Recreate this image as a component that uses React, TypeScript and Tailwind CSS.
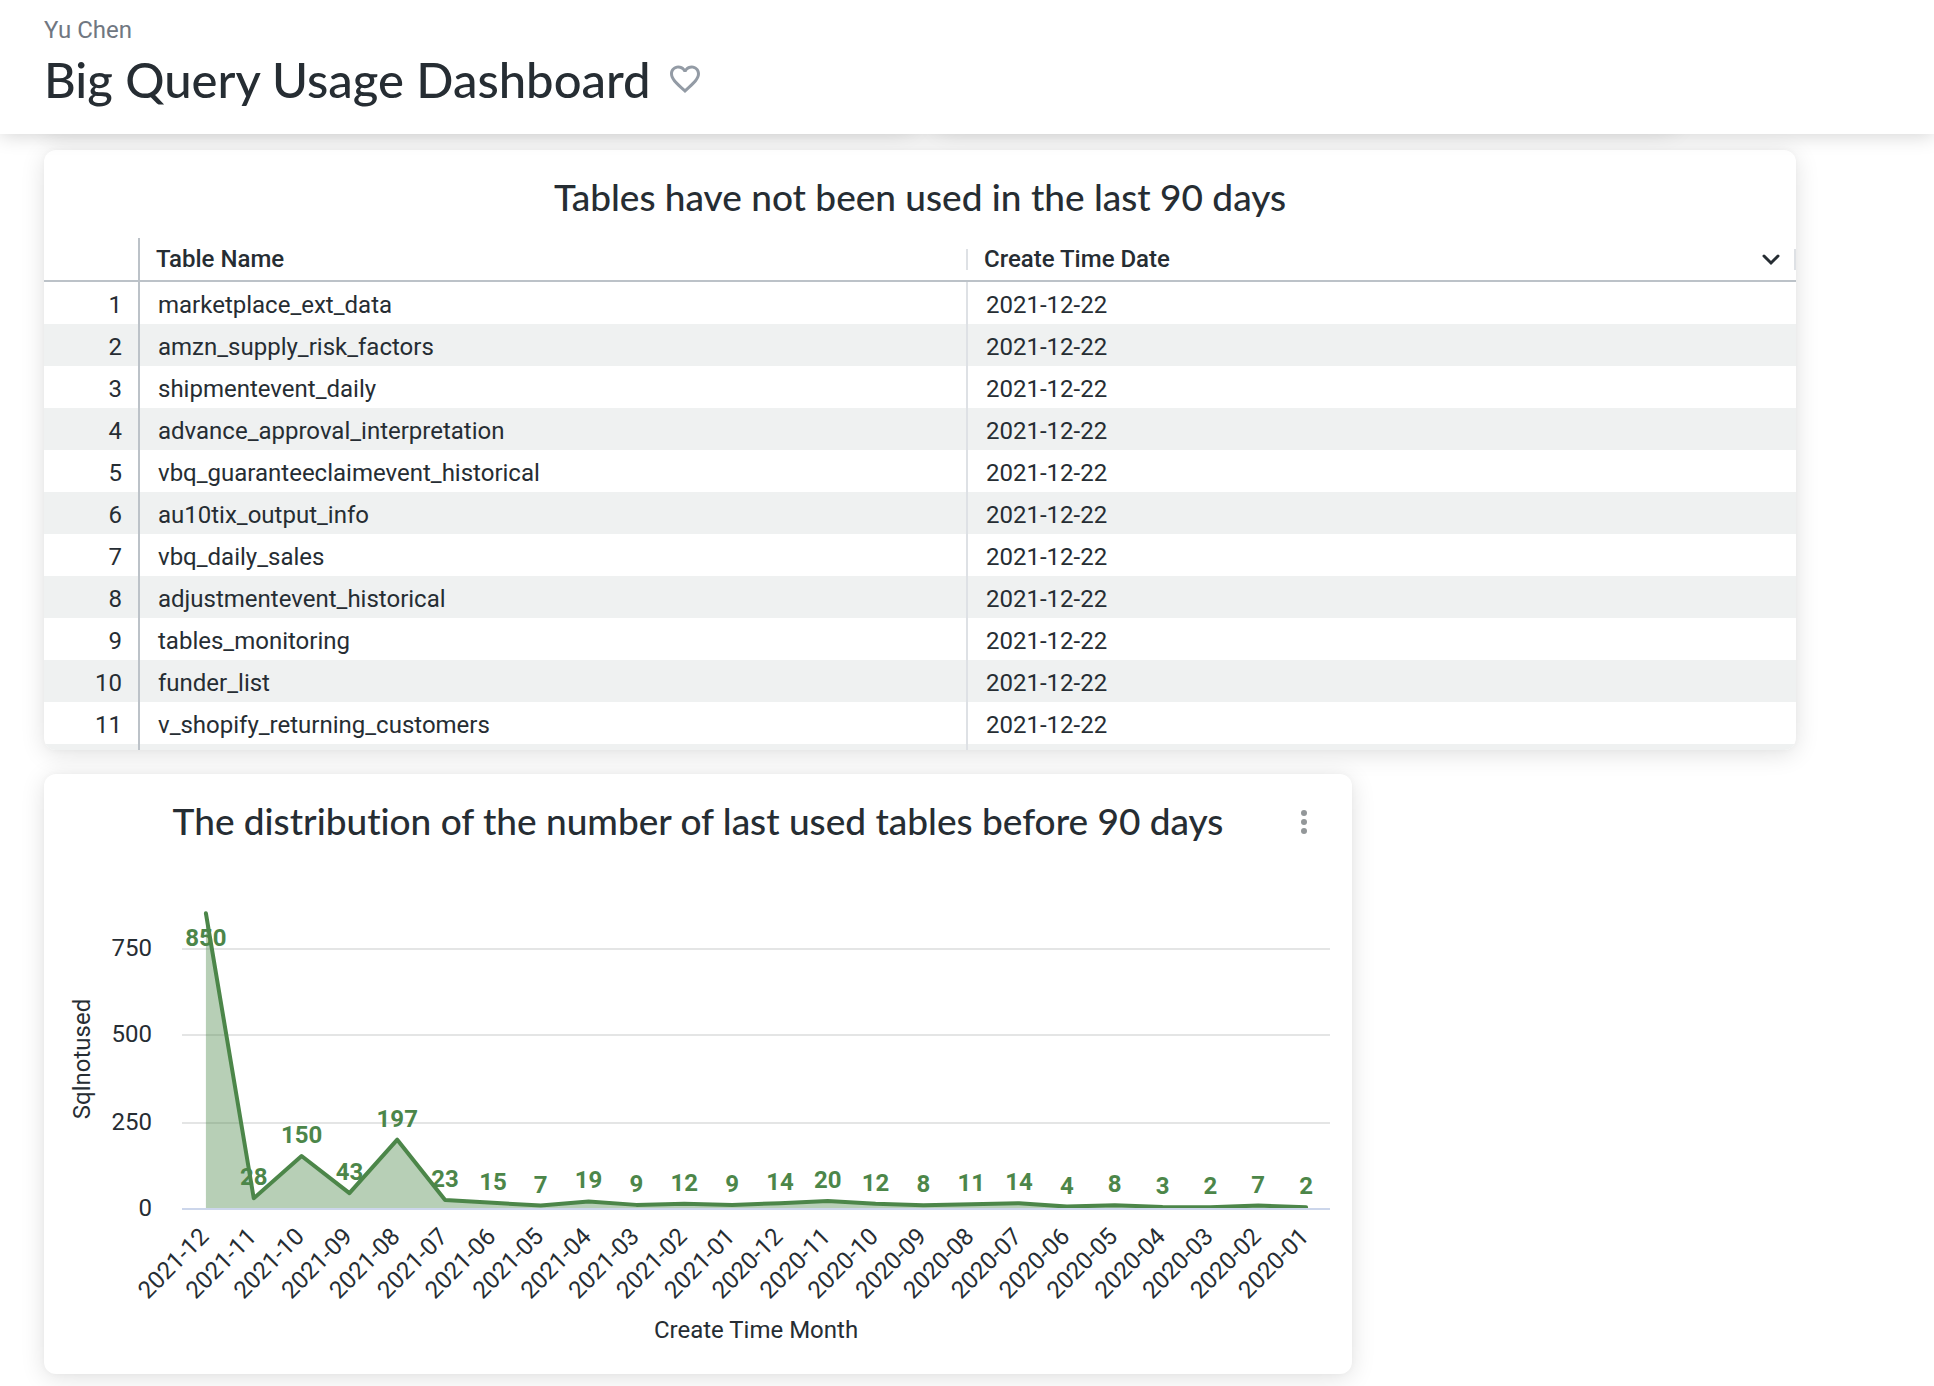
import { MdFavoriteBorder } from "react-icons/md";

const tableNames = [
  "marketplace_ext_data",
  "amzn_supply_risk_factors",
  "shipmentevent_daily",
  "advance_approval_interpretation",
  "vbq_guaranteeclaimevent_historical",
  "au10tix_output_info",
  "vbq_daily_sales",
  "adjustmentevent_historical",
  "tables_monitoring",
  "funder_list",
  "v_shopify_returning_customers",
];

const points: [string, number][] = [
  ["2021-12", 850],
  ["2021-11", 28],
  ["2021-10", 150],
  ["2021-09", 43],
  ["2021-08", 197],
  ["2021-07", 23],
  ["2021-06", 15],
  ["2021-05", 7],
  ["2021-04", 19],
  ["2021-03", 9],
  ["2021-02", 12],
  ["2021-01", 9],
  ["2020-12", 14],
  ["2020-11", 20],
  ["2020-10", 12],
  ["2020-09", 8],
  ["2020-08", 11],
  ["2020-07", 14],
  ["2020-06", 4],
  ["2020-05", 8],
  ["2020-04", 3],
  ["2020-03", 2],
  ["2020-02", 7],
  ["2020-01", 2],
];

const card =
  "overflow-hidden rounded-xl bg-white shadow-[0_4px_24px_rgba(0,0,0,0.12),0_0_6px_rgba(0,0,0,0.03)]";
const cardTitle =
  "font-['Lato'] text-[37px] leading-[46px] font-medium text-[#262d33] [font-variant-ligatures:none]";

function Header() {
  return (
    <header className="relative z-10 h-[134px] bg-white px-11 pt-4 shadow-[0_0_20px_rgba(0,0,0,0.2)]">
      <p className="text-2xl leading-7 text-[#707781]">Yu Chen</p>
      <div className="mt-1 flex items-center gap-4">
        <h1 className="font-['Lato'] text-[49px] leading-[62px] font-medium text-[#262d33]">
          Big Query Usage Dashboard
        </h1>
        <button type="button" aria-label="Add to favorites" className="text-[#939ba5]">
          <MdFavoriteBorder size={36} />
        </button>
      </div>
    </header>
  );
}

function UnusedTables() {
  return (
    <section className={`${card} col-span-4 h-[600px]`}>
      <h2 className={`${cardTitle} pt-6 pb-[18px] text-center`}>
        Tables have not been used in the last 90 days
      </h2>
      <table className="w-full table-fixed border-separate border-spacing-0 text-left text-2xl leading-[42px]">
        <colgroup>
          <col className="w-24" />
          <col />
          <col />
        </colgroup>
        <thead>
          <tr className="h-11">
            <th aria-label="Row" className="border-r-2 border-b-2 border-[#bcc2c8] p-0" />
            <th className="border-b-2 border-[#bcc2c8] p-0 font-medium">
              <div className="flex items-center justify-between pl-4">
                Table Name
                <span className="h-[21px] w-0.5 bg-[#dee1e5]" />
              </div>
            </th>
            <th className="border-b-2 border-[#bcc2c8] p-0 font-medium">
              <div className="flex items-center pl-4">
                <span className="grow">Create Time Date</span>
                <button type="button" aria-label="Sort by Create Time Date" className="mr-3">
                  <svg
                    width="22"
                    height="16"
                    viewBox="0 0 22 16"
                    fill="none"
                    stroke="#262d33"
                    strokeWidth="3"
                    strokeLinecap="round"
                  >
                    <path d="M4 5 11 12 18 5" />
                  </svg>
                </button>
                <span className="h-[21px] w-0.5 bg-[#dee1e5]" />
              </div>
            </th>
          </tr>
        </thead>
        <tbody className="leading-[38px]">
          {[...tableNames, ""].map((name, i) => (
            <tr key={i} className="h-[42px] even:bg-[#eff1f1]">
              <td className="border-r-2 border-[#bcc2c8] p-0 pt-1 pr-4 text-right">{name && i + 1}</td>
              <td className="border-r-2 border-[#dee1e5] p-0 pt-1 pl-[18px]">{name}</td>
              <td className="p-0 pt-1 pl-[18px]">{name && "2021-12-22"}</td>
            </tr>
          ))}
        </tbody>
      </table>
    </section>
  );
}

const LEFT = 138;
const RIGHT = 1286;
const BASE = 346;
const STEP = (RIGHT - LEFT) / points.length;
const px = (i: number) => LEFT + STEP * (i + 0.5);
const py = (v: number) => BASE - (v * 260) / 750;

const ticks = [
  { value: 750, y: 87 },
  { value: 500, y: 173 },
  { value: 250, y: 261 },
  { value: 0, y: 347 },
];

function DistributionChart() {
  const line = points.map(([, v], i) => `${px(i)},${py(v)}`).join(" ");
  return (
    <svg
      viewBox="0 0 1308 510"
      className="block w-full text-2xl"
      role="img"
      aria-label="Area chart of tables by create time month"
      fill="#262d33"
    >
      <defs>
        <clipPath id="plot">
          <rect x={LEFT} y="40" width={RIGHT - LEFT} height={BASE - 40} />
        </clipPath>
      </defs>
      {ticks.map(({ value, y }) => (
        <g key={value}>
          <line
            x1={LEFT}
            x2={RIGHT}
            y1={y}
            y2={y}
            stroke={value ? "#e4e5e5" : "#ccd6eb"}
            strokeWidth="2"
          />
          <text x="108" y={y + 7} textAnchor="end">
            {value}
          </text>
        </g>
      ))}
      <g clipPath="url(#plot)">
        <polygon
          points={`${px(0)},${BASE} ${line} ${px(points.length - 1)},${BASE}`}
          fill="#4c8649"
          fillOpacity="0.4"
        />
        <polyline
          points={line}
          fill="none"
          stroke="#4c8649"
          strokeWidth="4"
          strokeLinejoin="round"
          strokeLinecap="round"
        />
      </g>
      {points.map(([month, v], i) => (
        <g key={month}>
          <text
            x={px(i)}
            y={v === 850 ? 84 : Math.round(py(v)) - 13}
            textAnchor="middle"
            fill="#4c8649"
            className="font-bold"
          >
            {v}
          </text>
          <text transform={`translate(${px(i) + 4} ${BASE + 30}) rotate(-45)`} textAnchor="end">
            {month}
          </text>
        </g>
      ))}
      <text transform="translate(46 197) rotate(-90)" textAnchor="middle">
        Sqlnotused
      </text>
      <text x="712" y="476" textAnchor="middle">
        Create Time Month
      </text>
    </svg>
  );
}

function Distribution() {
  return (
    <section className={`${card} relative col-span-3 h-[600px]`}>
      <h2 className={`${cardTitle} pt-6 pb-[18px] text-center`}>
        The distribution of the number of last used tables before 90 days
      </h2>
      <button type="button" aria-label="Tile actions" className="absolute top-8 right-9">
        <svg width="24" height="32" viewBox="0 0 24 32" fill="#939799">
          <circle cx="12" cy="7" r="3" />
          <circle cx="12" cy="16" r="3" />
          <circle cx="12" cy="25" r="3" />
        </svg>
      </button>
      <DistributionChart />
    </section>
  );
}

export default function App() {
  return (
    <div className="min-h-screen overflow-hidden bg-white font-['Roboto',sans-serif] text-[#262d33]">
      <Header />
      <main className="-mt-12 mr-[138px] ml-11 pb-3">
        <div className="flex gap-6 pr-[120px]" aria-hidden="true">
          <div className={`${card} h-10 grow-[87]`} />
          <div className={`${card} h-10 grow-[74]`} />
        </div>
        <div className="mt-6 grid grid-cols-4 gap-6">
          <UnusedTables />
          <Distribution />
        </div>
      </main>
    </div>
  );
}
